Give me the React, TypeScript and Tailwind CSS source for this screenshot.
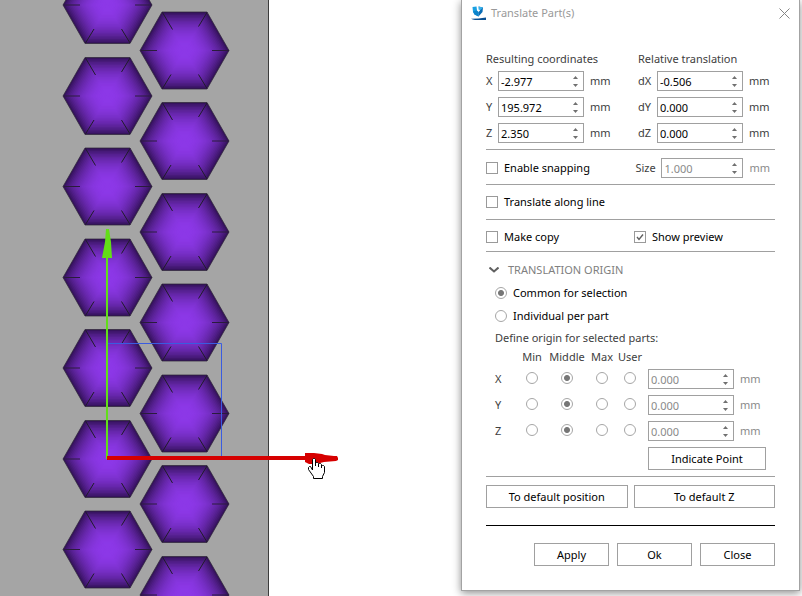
import { useState } from "react";

const LEFT_CENTERS = [5, 96, 186.5, 277.5, 368, 459, 549.5];
const RIGHT_CENTERS = [50.5, 141, 232, 322.5, 413.5, 504, 595];

const HEX_POINTS = "-44.5,0 -22.5,-38.5 22.5,-38.5 44.5,0 22.5,38.5 -22.5,38.5";

const RING_COUNT = 26;

function ringColor(t: number) {
  // t runs from 0 at the rim to 1 in the middle of the cell
  const k = Math.pow(Math.sin((Math.min(1, 0.07 + t * 1.05) * Math.PI) / 2), 0.6);
  const mix = (a: number, b: number) => Math.round(a + (b - a) * k);
  return `rgb(${mix(22, 140)},${mix(4, 56)},${mix(42, 231)})`;
}

function Scene() {
  const rings = Array.from({ length: RING_COUNT }, (_, i) => i);
  return (
    <svg
      className="block h-full w-full"
      viewBox="0 0 461 596"
      preserveAspectRatio="xMinYMin slice"
      role="img"
      aria-label="Model preview"
    >
      <defs>
        <g id="cell">
          {rings.map((i) => (
            <polygon
              key={i}
              points={HEX_POINTS}
              transform={`scale(${1 - i / RING_COUNT})`}
              fill={ringColor(i / RING_COUNT)}
            />
          ))}
          <polygon points={HEX_POINTS} fill="none" stroke="#2c2436" strokeOpacity="0.7" />
          <path
            d="M-22 -38L-12 -21M22.5 -38L14 -24M-22 38L-13.500 24M22.500 38L14 24"
            stroke="#1f1c28"
            strokeWidth="1"
          />
          <path d="M-44 0H-27.500M27.500 0H44.500" stroke="#2a1c3c" strokeWidth="1" />
        </g>
      </defs>
      <rect width="268" height="596" fill="#a5a5a5" />
      <rect x="268" width="1" height="596" fill="#3c3c3c" />
      {LEFT_CENTERS.map((y) => (
        <use key={y} href="#cell" x="107.5" y={y} />
      ))}
      {RIGHT_CENTERS.map((y) => (
        <use key={y} href="#cell" x="184.5" y={y} />
      ))}
      <path d="M108 343.500H221.500V456" fill="none" stroke="#3a5ce0" />
      <path d="M106 459V258H102L105 242L106 229H109L111 242L112 258H108V459Z" fill="#62de18" />
      <path
        d="M107 456H305V453H314L322 454L325 455L334 456H337L338 458V460L336 461L324 462L316 464H309L305 462V460H107Z"
        fill="#d60000"
      />
      <path
        d="M312.500 470V459.500L313.500 458.500H314.500L315.500 459.500V466V463.500L316.500 462.500H317.500L318.500 463.500V467V464.500L319.500 463.500H320.500L321.500 464.500V468V466.500L322.500 465.500H323.500L324.500 466.500V472.500L322.500 476.500V478.500H313.500V476.500L308.500 469.500V467.500L309.500 466.500H310.500Z"
        fill="#fff"
        stroke="#000"
      />
    </svg>
  );
}

function Arrow({ down = false }: { down?: boolean }) {
  return (
    <svg className="block h-[3px] w-[5px]" viewBox="0 0 5 3" aria-hidden="true">
      <path d={down ? "M0 0H5L2.500 3Z" : "M0 3H5L2.500 0Z"} fill="#707070" />
    </svg>
  );
}

function Spinner({
  label,
  initial,
  disabled = false,
  width = "w-[86px]",
}: {
  label: string;
  initial: string;
  disabled?: boolean;
  width?: string;
}) {
  const [value, setValue] = useState(initial);
  const step = (delta: number) => setValue((Number(value) + delta).toFixed(3));
  return (
    <span className={`flex h-5 border border-[#a0a0a0] bg-white ${width}`}>
      <input
        type="text"
        aria-label={label}
        value={value}
        disabled={disabled}
        onChange={(e) => setValue(e.target.value)}
        className="w-0 min-w-0 flex-1 bg-transparent pl-[2px] pt-px text-black outline-none disabled:text-[#8a8a8a]"
      />
      <span className="flex w-4 flex-col items-center justify-center gap-[5px]">
        <button type="button" aria-label={`Increase ${label}`} disabled={disabled} onClick={() => step(1)}>
          <Arrow />
        </button>
        <button type="button" aria-label={`Decrease ${label}`} disabled={disabled} onClick={() => step(-1)}>
          <Arrow down />
        </button>
      </span>
    </span>
  );
}

function Check({ label, checked = false }: { label: string; checked?: boolean }) {
  return (
    <label className="flex items-center gap-[6px] text-black">
      <span className="grid size-3">
        <input
          type="checkbox"
          defaultChecked={checked}
          className="peer col-start-1 row-start-1 size-3 appearance-none border border-[#9a9a9a] bg-white"
        />
        <svg
          viewBox="0 0 12 12"
          className="pointer-events-none invisible col-start-1 row-start-1 size-3 peer-checked:visible"
          aria-hidden="true"
        >
          <path d="M3 6L5 8.500L9 3.500" fill="none" stroke="#606060" strokeWidth="1.400" />
        </svg>
      </span>
      {label}
    </label>
  );
}

const RADIO =
  "block size-3 shrink-0 appearance-none rounded-full border border-[#a6a6a6] bg-white checked:bg-[radial-gradient(circle,#767676_0_2.5px,transparent_3.5px)]";

const BUTTON = "h-[23px] border border-[#a0a0a0] bg-white text-black";

function CoordinateGroup({ title, rows, labelWidth }: { title: string; rows: string[][]; labelWidth: string }) {
  return (
    <fieldset>
      <legend className="mb-1 leading-4">{title}</legend>
      <div className="flex flex-col gap-[6px]">
        {rows.map(([name, value]) => (
          <div key={name} className="flex items-center">
            <span className={labelWidth}>{name}</span>
            <Spinner label={name} initial={value} />
            <span className="ml-[6px]">mm</span>
          </div>
        ))}
      </div>
    </fieldset>
  );
}

function Logo() {
  return (
    <svg className="h-4 w-4" viewBox="0 0 16 16" aria-hidden="true">
      <path d="M1.500 2L5.500 1.500L6 5.500L7.500 7V11.500L3.500 9.500L2 7Z" fill="#1aa0e2" />
      <path d="M2 6.500L5.500 5.500L7.500 7V11.500L3.500 9.500Z" fill="#0b83cb" />
      <path d="M7.500 1.500L12 2.500L11.500 7L7.500 11.500V7L9 5.500Z" fill="#0a6db5" />
      <path d="M7.500 1.500L12 2.500L9.500 5L7.500 4.500Z" fill="#38b2ec" />
      <path d="M0 13.800C5 13.800 10 13.400 15 12.500V15H4C2.500 14.700 1 14.300 0 13.800Z" fill="#0a4f91" />
    </svg>
  );
}

function OriginTable() {
  return (
    <table className="mt-px w-[272px] table-fixed border-collapse">
      <colgroup>
        <col className="w-[20px]" />
        <col className="w-[34px]" />
        <col className="w-[36px]" />
        <col className="w-[34px]" />
        <col className="w-[22px]" />
        <col />
      </colgroup>
      <thead>
        <tr className="h-[19px]">
          <th />
          {["Min", "Middle", "Max", "User"].map((name) => (
            <th key={name} scope="col" className="p-0 text-center font-normal">
              <span className="flex justify-center">{name}</span>
            </th>
          ))}
          <th />
        </tr>
      </thead>
      <tbody>
        {["X", "Y", "Z"].map((axis) => (
          <tr key={axis} className="h-[26px]">
            <th scope="row" className="p-0 text-left font-normal">
              {axis}
            </th>
            {["Min", "Middle", "Max", "User"].map((name) => (
              <td key={name} className="p-0 pb-[3px]">
                <input
                  type="radio"
                  name={`origin-${axis}`}
                  aria-label={`${axis} ${name}`}
                  defaultChecked={name === "Middle"}
                  className={`mx-auto ${RADIO}`}
                />
              </td>
            ))}
            <td className="p-0 pl-[7px]">
              <span className="flex items-center gap-[6px] text-[#8a8a8a]">
                <Spinner label={`Origin ${axis}`} initial="0.000" disabled />
                mm
              </span>
            </td>
          </tr>
        ))}
      </tbody>
    </table>
  );
}

export default function App() {
  const [open, setOpen] = useState(true);
  return (
    <main className="flex h-screen overflow-hidden bg-white pr-[2px] font-['Noto_Sans','Open_Sans',sans-serif] text-[11px] leading-4 text-[#404040]">
      <div className="min-w-0 flex-1">
        <Scene />
      </div>
      <section
        aria-label="Translate Part(s)"
        className="z-10 w-[339px] shrink-0 self-start border border-t-0 border-[#a3a3a3] bg-white pb-6 shadow-[0_2px_8px_rgba(0,0,0,0.45)]"
      >
        <header className="flex h-[26px] items-center pl-[9px] pr-[9px] text-[#999999]">
          <Logo />
          <h1 className="ml-1 flex-1">Translate Part(s)</h1>
          <button type="button" aria-label="Close window">
            <svg className="block size-[11px]" viewBox="0 0 11 11" aria-hidden="true">
              <path d="M0.500 0.500L10.500 10.500M10.500 0.500L0.500 10.500" stroke="#858585" />
            </svg>
          </button>
        </header>

        <div className="px-6">
          <div className="grid grid-cols-[152px_1fr] border-b border-[#a0a0a0] pb-[6px] pt-[25px]">
            <CoordinateGroup
              title="Resulting coordinates"
              labelWidth="w-3"
              rows={[["X", "-2.977"], ["Y", "195.972"], ["Z", "2.350"]]}
            />
            <CoordinateGroup
              title="Relative translation"
              labelWidth="w-[19px]"
              rows={[["dX", "-0.506"], ["dY", "0.000"], ["dZ", "0.000"]]}
            />
          </div>

          <div className="flex h-[35px] items-center justify-between border-b border-[#a0a0a0] pr-[5px] pt-[2px]">
            <Check label="Enable snapping" />
            <div className="flex items-center">
              <span className="w-[26px]">Size</span>
              <Spinner label="Size" initial="1.000" disabled width="w-[82px]" />
              <span className="ml-[6px] text-[#8a8a8a]">mm</span>
            </div>
          </div>

          <div className="flex h-[35px] items-center border-b border-[#a0a0a0]">
            <Check label="Translate along line" />
          </div>

          <div className="grid h-8 grid-cols-[148px_1fr] items-center border-b border-[#a0a0a0] pt-[2px]">
            <Check label="Make copy" />
            <Check label="Show preview" checked />
          </div>

          <div className="border-b border-[#a0a0a0] pb-[6px] pt-[10px]">
            <button
              type="button"
              aria-expanded={open}
              onClick={() => setOpen(!open)}
              className="flex items-center gap-[9px] pl-[3px] text-[#808080]"
            >
              <svg className="h-[6px] w-[10px]" viewBox="0 0 10 6" aria-hidden="true">
                <path d="M0.500 0.500L5 4.500L9.500 0.500" fill="none" stroke="#606060" strokeWidth="2" />
              </svg>
              TRANSLATION ORIGIN
            </button>
            {open && (
              <div className="pl-[9px]">
                <label className="mt-[7px] flex items-center gap-[6px] text-black">
                  <input type="radio" name="scope" defaultChecked className={RADIO} />
                  Common for selection
                </label>
                <label className="mt-[7px] flex items-center gap-[6px] text-black">
                  <input type="radio" name="scope" className={RADIO} />
                  Individual per part
                </label>
                <p className="mt-[6px]">Define origin for selected parts:</p>
                <OriginTable />
                <div className="flex justify-end pr-[9px] pt-[3px]">
                  <button type="button" className={`w-[118px] ${BUTTON}`}>
                    Indicate Point
                  </button>
                </div>
              </div>
            )}
          </div>

          <div className="grid grid-cols-2 gap-[6px] border-b border-black pb-[17px] pt-2">
            <button type="button" className={BUTTON}>
              To default position
            </button>
            <button type="button" className={BUTTON}>
              To default Z
            </button>
          </div>

          <footer className="flex justify-end gap-2 pt-[17px]">
            {["Apply", "Ok", "Close"].map((name) => (
              <button key={name} type="button" className={`w-[75px] ${BUTTON}`}>
                {name}
              </button>
            ))}
          </footer>
        </div>
      </section>
    </main>
  );
}
